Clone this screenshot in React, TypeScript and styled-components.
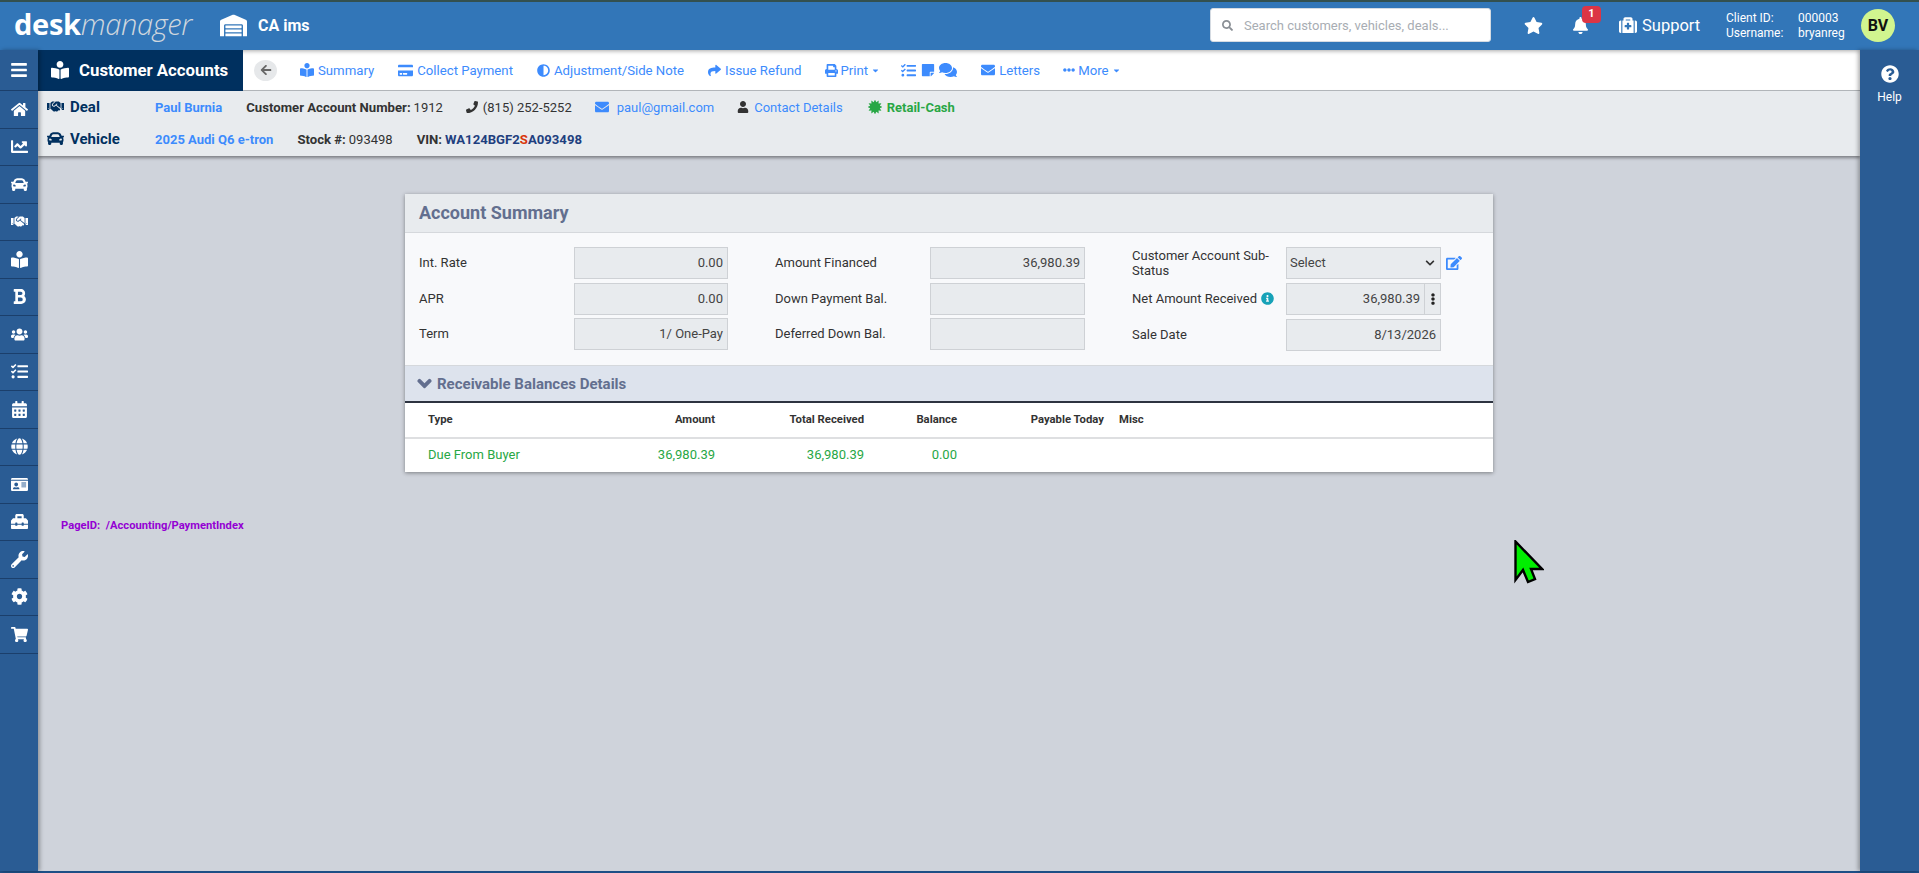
import React from "react";
import styled, { createGlobalStyle } from "styled-components";
import {
  FaAdjust, FaArrowLeft, FaBars, FaBell, FaBold, FaBookReader, FaCalendarAlt, FaCar, FaCaretDown,
  FaChartLine, FaChevronDown, FaCog, FaComments, FaCreditCard, FaEdit, FaEllipsisH,
  FaEllipsisV, FaEnvelope, FaGlobe, FaHandshake, FaHome, FaIdCard, FaInfoCircle, FaMedkit, FaPhone,
  FaPrint, FaQuestionCircle, FaSearch, FaShare, FaShoppingCart, FaStar, FaStickyNote, FaTasks,
  FaToolbox, FaUser, FaUsers, FaWarehouse, FaWrench,
} from "react-icons/fa";

const GlobalStyle = createGlobalStyle`
  html, body { margin: 0; padding: 0; height: 100%; overflow: hidden; }
  body { font-family: Roboto, "Liberation Sans", sans-serif; font-size: 13px; color: #333; }
  * { box-sizing: border-box; }
`;

const Page = styled.div`
  height: 873px;
  display: flex;
  flex-direction: column;
  position: relative;
  border-top: 2px solid #33504f;
  border-bottom: 2px solid #1d4f86;
  background: #cfd3db;
`;
const Header = styled.header`
  height: 48px;
  flex: none;
  display: flex;
  align-items: center;
  background: #3276b8;
  color: #fff;
  padding-left: 14px;
`;
const Logo = styled.div`
  width: 206px;
  font-family: "Open Sans", sans-serif;
  font-size: 29px;
  line-height: 40px;
  font-weight: 700;
  letter-spacing: -0.3px;
  margin-top: -4px;
  em { font-weight: 300; color: #cfd6de; }
`;
const Dealer = styled.div`
  display: flex;
  align-items: center;
  gap: 11px;
  font-size: 16px;
  font-weight: 700;
  margin-top: -2px;
`;
const HeaderRight = styled.div`
  margin-left: auto;
  margin-top: -2px;
  display: flex;
  align-items: center;
`;
const Search = styled.div`
  width: 281px;
  height: 34px;
  display: flex;
  align-items: center;
  gap: 11px;
  padding-left: 11px;
  background: #fff;
  border: 1px solid #d5dbe2;
  border-radius: 3px;
  color: #a8adb3;
  font-size: 13px;
  svg { color: #8a8f95; }
`;
const HeaderIcon = styled.span<{ $left: number }>`
  position: relative;
  display: flex;
  margin-left: ${(p) => p.$left}px;
`;
const Badge = styled.span`
  position: absolute;
  left: 10px;
  top: -11px;
  width: 19px;
  height: 17px;
  background: #dc3545;
  border-radius: 4px;
  color: #fff;
  font-size: 11px;
  font-weight: 700;
  text-align: center;
  line-height: 16px;
`;
const Support = styled.div`
  margin-left: 30px;
  display: flex;
  align-items: center;
  gap: 5px;
  font-size: 16.5px;
  width: 107px;
`;
const ClientGrid = styled.div`
  display: grid;
  grid-template-columns: 72px auto;
  font-size: 12px;
  line-height: 15px;
  width: 135px;
  margin-top: 2px;
`;
const Avatar = styled.div`
  width: 34px;
  height: 33px;
  margin-right: 24px;
  border-radius: 50%;
  background: #d1f58f;
  color: #111;
  font-size: 16px;
  font-weight: 700;
  display: flex;
  align-items: center;
  justify-content: center;
`;
const Body = styled.div`
  flex: 1;
  display: flex;
  min-height: 0;
`;
const SideBar = styled.nav`
  width: 38px;
  flex: none;
  background: #2a5c94;
  box-shadow: 2px 0 4px rgba(0, 0, 0, 0.3);
  z-index: 2;
`;
const SideItem = styled.div<{ $first?: boolean }>`
  height: ${(p) => (p.$first ? "41px" : "37.53px")};
  display: flex;
  align-items: center;
  justify-content: center;
  color: #fff;
  border-bottom: 1px solid #1b3f6b;
  font-size: 17px;
`;
const Main = styled.main`
  flex: 1;
  min-width: 0;
  display: flex;
  flex-direction: column;
`;
const ToolBar = styled.div`
  height: 41px;
  flex: none;
  display: flex;
  align-items: center;
  background: #fff;
  border-bottom: 1px solid #b5b9bd;
  box-shadow: inset 0 4px 4px -3px rgba(0, 0, 0, 0.35);
`;
const ModuleTitle = styled.div`
  width: 205px;
  height: 41px;
  display: flex;
  align-items: center;
  gap: 10px;
  padding-left: 13px;
  background: #00305f;
  color: #fff;
  font-size: 16.8px;
  font-weight: 700;
`;
const BackButton = styled.span`
  width: 23px;
  height: 21px;
  margin-left: 11px;
  margin-right: 23px;
  border-radius: 50%;
  background: #e6e8ea;
  color: #666;
  display: flex;
  align-items: center;
  justify-content: center;
`;
const ToolLink = styled.span<{ $right?: number; $gap?: number }>`
  display: flex;
  align-items: center;
  gap: ${(p) => p.$gap ?? 4}px;
  color: #3d8bfd;
  font-size: 13.2px;
  margin-right: ${(p) => p.$right ?? 24}px;
  white-space: nowrap;
`;
const SubBar = styled.div`
  height: 65px;
  flex: none;
  padding-left: 9px;
  background: #e8ebee;
  box-shadow: 0 2px 3px rgba(0, 0, 0, 0.4);
  display: flex;
  flex-direction: column;
`;
const SubRow = styled.div`
  height: 32px;
  display: flex;
  align-items: center;
  font-size: 13px;
  white-space: nowrap;
`;
const SubTitle = styled.div`
  width: 108px;
  display: flex;
  align-items: center;
  gap: 6px;
  font-size: 15px;
  font-weight: 700;
  color: #00305f;
  margin-top: -1px;
`;
const Strong = styled.b<{ $left?: number }>`
  font-weight: 700;
  font-size: 13.15px;
  color: #333;
  margin-left: ${(p) => p.$left ?? 0}px;
`;
const Link = styled.span<{ $left?: number; $bold?: boolean }>`
  display: inline-flex;
  align-items: center;
  gap: 4px;
  color: #3d8bfd;
  font-weight: ${(p) => (p.$bold ? 700 : 400)};
  margin-left: ${(p) => p.$left ?? 0}px;
`;
const Plain = styled.span<{ $left?: number }>`
  display: inline-flex;
  align-items: center;
  gap: 5px;
  margin-left: ${(p) => p.$left ?? 0}px;
  svg { color: #333; }
`;
const Retail = styled.span`
  display: inline-flex;
  align-items: center;
  gap: 5px;
  margin-left: 25px;
  color: #28a745;
  font-weight: 700;
`;
const Vin = styled.b`
  color: #1f3f7f;
  font-size: 13.15px;
  margin-left: 3px;
  i { font-style: normal; color: #d9360b; }
`;
const Content = styled.div`
  flex: 1;
  padding-top: 38px;
  position: relative;
`;
const Card = styled.section`
  width: 1088px;
  margin: 0 auto;
  background: #f8f9fb;
  box-shadow: 0 1px 4px rgba(0, 0, 0, 0.4);
`;
const CardTitle = styled.h2`
  margin: 0;
  height: 39px;
  padding-left: 14px;
  background: #e8ebee;
  border-bottom: 1px solid #d5d8dc;
  color: #636f8f;
  font-size: 18px;
  font-weight: 700;
  line-height: 37px;
`;
const FormGrid = styled.div`
  height: 132px;
  padding: 12px 0 0 14px;
  display: grid;
  grid-template-columns: 356px 357px 1fr;
`;
const FormCol = styled.div`
  display: flex;
  flex-direction: column;
`;
const FormRow = styled.div<{ $height: number; $label?: number; $input?: number; $withEdit?: boolean }>`
  height: ${(p) => p.$height}px;
  display: grid;
  grid-template-columns: ${(p) => p.$label ?? 155}px ${(p) => p.$input ?? 155}px ${(p) => (p.$withEdit ? "1fr" : "")};
  align-items: center;
`;
const Label = styled.label`
  display: flex;
  align-items: center;
  gap: 4px;
  line-height: 15px;
  color: #333;
  padding-bottom: 1px;
  svg { color: #17a2b8; }
`;
const ReadOnly = styled.div<{ $grow?: boolean }>`
  height: 32px;
  padding: 0 4px 1px;
  display: flex;
  align-items: center;
  justify-content: flex-end;
  background: #e8ebee;
  border: 1px solid #ced1d5;
  color: #444;
  flex: ${(p) => (p.$grow ? 1 : "none")};
`;
const SelectBox = styled(ReadOnly)`
  justify-content: space-between;
  padding-left: 3px;
  svg { color: #333; margin-right: 1px; }
`;
const InputGroup = styled.div`
  display: flex;
`;
const AddOn = styled.div`
  width: 17px;
  height: 32px;
  margin-left: -1px;
  display: flex;
  align-items: center;
  justify-content: center;
  background: #e8ebee;
  border: 1px solid #ced1d5;
  color: #222;
`;
const EditLink = styled.span`
  color: #3d8bfd;
  padding-left: 5px;
  display: flex;
`;
const SectionBand = styled.div`
  height: 36px;
  display: flex;
  align-items: center;
  gap: 5px;
  padding-left: 12px;
  background: #dde3ed;
  border-top: 1px solid #d5d8dc;
  color: #636f8f;
  font-size: 15px;
  font-weight: 700;
`;
const Table = styled.div`
  background: #fff;
  border-top: 2px solid #2d3340;
`;
const TableRow = styled.div<{ $head?: boolean }>`
  height: ${(p) => (p.$head ? "36px" : "33px")};
  display: grid;
  grid-template-columns: 117px 170px 149px 93px 147px 1fr;
  padding: 0 0 2px 23px;
  align-items: center;
  font-weight: ${(p) => (p.$head ? 700 : 400)};
  font-size: ${(p) => (p.$head ? "11.3px" : "13px")};
  color: ${(p) => (p.$head ? "#333" : "#28a745")};
  border-bottom: ${(p) => (p.$head ? "2px solid #dedfe1" : "0")};
`;
const Cell = styled.div<{ $right?: boolean; $pad?: number }>`
  text-align: ${(p) => (p.$right ? "right" : "left")};
  padding-left: ${(p) => p.$pad ?? 0}px;
`;
const PageId = styled.div`
  margin: 47px 0 0 23px;
  color: #9400d3;
  font-size: 11.2px;
  font-weight: 700;
  white-space: pre;
`;
const HelpBar = styled.aside`
  width: 59px;
  flex: none;
  background: #2a5c94;
  color: #fff;
  box-shadow: -2px 0 4px rgba(0, 0, 0, 0.3);
  display: flex;
  flex-direction: column;
  align-items: center;
  padding-top: 15px;
  gap: 7px;
  font-size: 12px;
  z-index: 2;
`;
const Pointer = styled.svg`
  position: absolute;
  left: 1514px;
  top: 538px;
`;

const sideIcons = [
  FaHome, FaChartLine, FaCar, FaHandshake, FaBookReader, FaBold, FaUsers, FaTasks,
  FaCalendarAlt, FaGlobe, FaIdCard, FaToolbox, FaWrench, FaCog, FaShoppingCart,
];

// spiky seal used for the deal type
const burstPoints = Array.from({ length: 24 }, (_, i) => {
  const r = i % 2 === 0 ? 7.4 : 5;
  const a = (i * Math.PI) / 12;
  return `${(7 + r * Math.cos(a)).toFixed(2)},${(7 + r * Math.sin(a)).toFixed(2)}`;
}).join(" ");

const App = () => (
  <>
    <GlobalStyle />
    <Page>
      <Header>
        <Logo>desk<em>manager</em></Logo>
        <Dealer>
          <FaWarehouse size={27} />
          <span>CA ims</span>
        </Dealer>
        <HeaderRight>
          <Search>
            <FaSearch size={11} />
            <span>Search customers, vehicles, deals...</span>
          </Search>
          <HeaderIcon $left={33}><FaStar size={19} /></HeaderIcon>
          <HeaderIcon $left={29}><FaBell size={17} /><Badge>1</Badge></HeaderIcon>
          <Support><FaMedkit size={18} />Support</Support>
          <ClientGrid>
            <span>Client ID:</span><span>000003</span>
            <span>Username:</span><span>bryanreg</span>
          </ClientGrid>
          <Avatar>BV</Avatar>
        </HeaderRight>
      </Header>
      <Body>
        <SideBar>
          <SideItem $first><FaBars size={18} /></SideItem>
          {sideIcons.map((Icon, i) => (
            <SideItem key={i}><Icon /></SideItem>
          ))}
        </SideBar>
        <Main>
          <ToolBar>
            <ModuleTitle><FaBookReader size={18} />Customer Accounts</ModuleTitle>
            <BackButton><FaArrowLeft size={12} /></BackButton>
            <ToolLink><FaBookReader size={14} />Summary</ToolLink>
            <ToolLink><FaCreditCard size={15} />Collect Payment</ToolLink>
            <ToolLink><FaAdjust size={13} />Adjustment/Side Note</ToolLink>
            <ToolLink $right={23}><FaShare size={13} />Issue Refund</ToolLink>
            <ToolLink $right={21} $gap={3}><FaPrint size={13} />Print<FaCaretDown size={9} /></ToolLink>
            <ToolLink $right={24}><FaTasks size={15} /><FaStickyNote size={14} style={{ marginLeft: 1 }} /><FaComments size={18} /></ToolLink>
            <ToolLink $right={23}><FaEnvelope size={14} />Letters</ToolLink>
            <ToolLink $gap={3}><FaEllipsisH size={12} />More<FaCaretDown size={9} /></ToolLink>
          </ToolBar>
          <SubBar>
            <SubRow>
              <SubTitle><FaHandshake size={17} />Deal</SubTitle>
              <Link $bold>Paul Burnia</Link>
              <Strong $left={24}>Customer Account Number:</Strong>
              <Plain $left={3}>1912</Plain>
              <Plain $left={23}><FaPhone size={12} />(815) 252-5252</Plain>
              <Link $left={23}><FaEnvelope size={14} style={{ marginRight: 4 }} />paul@gmail.com</Link>
              <Plain $left={23}><FaUser size={12} /><Link>Contact Details</Link></Plain>
              <Retail>
                <svg width="14" height="14" viewBox="0 0 14 14"><polygon points={burstPoints} fill="#28a745" /></svg>
                Retail-Cash
              </Retail>
            </SubRow>
            <SubRow>
              <SubTitle><FaCar size={17} />Vehicle</SubTitle>
              <Link $bold>2025 Audi Q6 e-tron</Link>
              <Strong $left={24}>Stock #:</Strong>
              <Plain $left={3}>093498</Plain>
              <Strong $left={24}>VIN:</Strong>
              <Vin>WA124BGF2<i>S</i>A093498</Vin>
            </SubRow>
          </SubBar>
          <Content>
            <Card>
              <CardTitle>Account Summary</CardTitle>
              <FormGrid>
                <FormCol>
                  <FormRow $height={36} $input={154}><Label>Int. Rate</Label><ReadOnly>0.00</ReadOnly></FormRow>
                  <FormRow $height={35} $input={154}><Label>APR</Label><ReadOnly>0.00</ReadOnly></FormRow>
                  <FormRow $height={36} $input={154}><Label>Term</Label><ReadOnly>1/ One-Pay</ReadOnly></FormRow>
                </FormCol>
                <FormCol>
                  <FormRow $height={36}><Label>Amount Financed</Label><ReadOnly>36,980.39</ReadOnly></FormRow>
                  <FormRow $height={35}><Label>Down Payment Bal.</Label><ReadOnly /></FormRow>
                  <FormRow $height={36}><Label>Deferred Down Bal.</Label><ReadOnly /></FormRow>
                </FormCol>
                <FormCol>
                  <FormRow $height={36} $label={154} $withEdit>
                    <Label>Customer Account Sub-<br />Status</Label>
                    <SelectBox>Select<FaChevronDown size={10} /></SelectBox>
                    <EditLink><FaEdit size={16} /></EditLink>
                  </FormRow>
                  <FormRow $height={36} $label={154} $withEdit>
                    <Label>Net Amount Received <FaInfoCircle size={13} /></Label>
                    <InputGroup>
                      <ReadOnly $grow>36,980.39</ReadOnly>
                      <AddOn><FaEllipsisV size={12} /></AddOn>
                    </InputGroup>
                  </FormRow>
                  <FormRow $height={36} $label={154}><Label>Sale Date</Label><ReadOnly>8/13/2026</ReadOnly></FormRow>
                </FormCol>
              </FormGrid>
              <SectionBand><FaChevronDown size={15} stroke="currentColor" strokeWidth={50} />Receivable Balances Details</SectionBand>
              <Table>
                <TableRow $head>
                  <Cell>Type</Cell>
                  <Cell $right>Amount</Cell>
                  <Cell $right>Total Received</Cell>
                  <Cell $right>Balance</Cell>
                  <Cell $right>Payable Today</Cell>
                  <Cell $pad={15}>Misc</Cell>
                </TableRow>
                <TableRow>
                  <Cell>Due From Buyer</Cell>
                  <Cell $right>36,980.39</Cell>
                  <Cell $right>36,980.39</Cell>
                  <Cell $right>0.00</Cell>
                  <Cell />
                  <Cell />
                </TableRow>
              </Table>
            </Card>
            <PageId>{"PageID:  /Accounting/PaymentIndex"}</PageId>
          </Content>
        </Main>
        <HelpBar>
          <FaQuestionCircle size={18} />
          <span>Help</span>
        </HelpBar>
      </Body>
      <Pointer width="30" height="46" viewBox="0 0 30 46">
        <path d="M1.5 1.5 L1.5 40 L9 30 L14 42 L21 39 L17 29 L28 29 Z" fill="#00ee00" stroke="#000" strokeWidth="2.4" strokeLinejoin="miter" />
      </Pointer>
    </Page>
  </>
);

export default App;
